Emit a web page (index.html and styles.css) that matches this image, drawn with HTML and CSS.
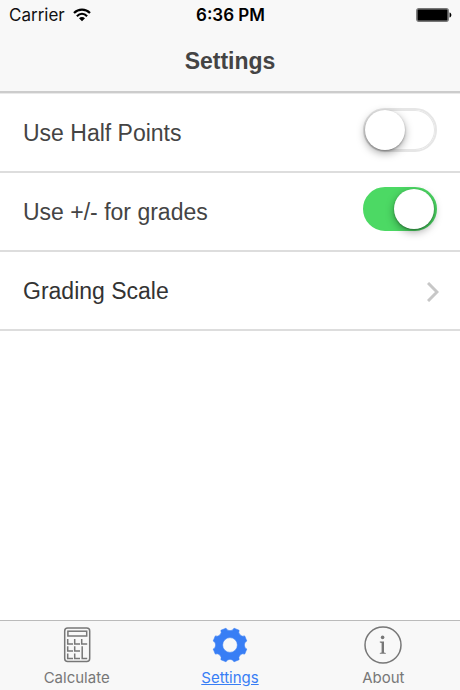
FILE: index.html
```
<!DOCTYPE html>
<html lang="en">
<head>
    <meta charset="UTF-8">
    <meta name="viewport" content="width=device-width, initial-scale=1.0">
    <title>Settings</title>
    <link rel="stylesheet" href="styles.css">
</head>
<body>
    <header class="header">
        <div class="status">
            <div class="carrier">
                <span>Carrier</span>
                <svg width="18" height="14" viewBox="0 0 18 14" fill="none" stroke="#000" stroke-width="2.2">
                    <path d="M1 5C5.5 .6 12.5 .6 17 5"/>
                    <path d="M3.9 8.2C6.9 5.2 11.1 5.2 14.1 8.2"/>
                    <path d="M9 13.2L6 10.3C7.7 8.7 10.3 8.7 12 10.3Z" fill="#000" stroke="none"/>
                </svg>
            </div>
            <span class="time">6:36 PM</span>
            <svg class="battery" width="36" height="14" viewBox="0 0 36 14">
                <rect x=".7" y=".7" width="31.6" height="12.6" rx="2" fill="#999" stroke="#777" stroke-width="1.2"/>
                <rect x="1.6" y="1.6" width="29.8" height="10.8" rx="1" fill="#000"/>
                <path d="M33.5 4.5C36 5 36 9 33.5 9.5Z" fill="#000"/>
            </svg>
        </div>
        <h1>Settings</h1>
    </header>

    <main class="list">
        <div class="item">
            <label for="half">Use Half Points</label>
            <input type="checkbox" class="toggle" id="half">
        </div>
        <div class="item">
            <label for="plus">Use +/- for grades</label>
            <input type="checkbox" class="toggle" id="plus" checked>
        </div>
        <a href="#scale" class="item link">
            <span>Grading Scale</span>
            <svg width="12" height="20" viewBox="0 0 12 20" fill="none" stroke="#c7c7c7" stroke-width="3">
                <path d="M1 1L10 10L1 19"/>
            </svg>
        </a>
    </main>

    <nav class="tabs">
        <a href="#calculate" class="tab">
            <svg width="38" height="38" viewBox="0 0 38 38" fill="none" stroke="#777" stroke-width="1.5">
                <rect x="6.7" y="2" width="25" height="33.4" rx="3"/>
                <rect x="9.9" y="5.2" width="18.8" height="4.8"/>
                <path d="M9.7 13V18H15M16.7 13V18H22M23.7 13V18H29.2"/>
                <path d="M9.7 20.2V25H15M16.7 20.2V25H22"/>
                <path d="M9.7 27.4V32.4H15M16.7 27.4V32.4H22M24.2 20.2V32.4H29.2"/>
            </svg>
            <span>Calculate</span>
        </a>
        <a href="#settings" class="tab active">
            <svg width="38" height="38" viewBox="-19 -19 38 38">
                <path fill="#387ef5" stroke="#387ef5" stroke-width=".6" stroke-linejoin="round" fill-rule="evenodd" d="M-4 -16.8Q-3 -14.3 0 -14.3Q3 -14.3 4 -16.8L9.1 -14.7Q8 -12.2 10.1 -10.1Q12.2 -8 14.7 -9.1L16.8 -4Q14.3 -3 14.3 0Q14.3 3 16.8 4L14.7 9.1Q12.2 8 10.1 10.1Q8 12.2 9.1 14.7L4 16.8Q3 14.3 0 14.3Q-3 14.3 -4 16.8L-9.1 14.7Q-8 12.2 -10.1 10.1Q-12.2 8 -14.7 9.1L-16.8 4Q-14.3 3 -14.3 0Q-14.3 -3 -16.8 -4L-14.7 -9.1Q-12.2 -8 -10.1 -10.1Q-8 -12.2 -9.1 -14.7ZM0 -7.4A7.4 7.4 0 1 0 0 7.4A7.4 7.4 0 1 0 0 -7.4Z"/>
            </svg>
            <span>Settings</span>
        </a>
        <a href="#about" class="tab">
            <svg width="38" height="38" viewBox="0 0 38 38" fill="#777">
                <circle cx="19" cy="19" r="18" fill="none" stroke="#777" stroke-width="1.5"/>
                <circle cx="18.6" cy="11.4" r="1.8"/>
                <path d="M15.8 15.6H20V26.6L21.8 27V27.8H15.8V27L17.6 26.6V17L15.8 16.5Z"/>
            </svg>
            <span>About</span>
        </a>
    </nav>
</body>
</html>
```
FILE: styles.css
```
* {
    margin: 0;
    padding: 0;
    box-sizing: border-box;
}
body {
    min-height: 100vh;
    display: flex;
    flex-direction: column;
    background-color: #fff;
    color: #444;
    font-family: "Liberation Sans", Arial, sans-serif;
}
a {
    color: inherit;
    text-decoration: none;
}
.header {
    background-color: #f8f8f8;
    border-bottom: 2px solid #ccc;
}
.status {
    display: grid;
    grid-template-columns: 1fr auto 1fr;
    align-items: center;
    height: 30px;
    padding: 0 8px 0 9px;
    color: #111;
    font-family: Inter, sans-serif;
    font-size: 17px;
}
.carrier {
    display: flex;
    align-items: center;
    gap: 8px;
}
.time {
    color: #000;
    font-weight: 600;
}
.battery {
    justify-self: end;
}
h1 {
    padding: 2px 0 1px;
    line-height: 58px;
    text-align: center;
    font-size: 23px;
}
.list {
    flex: 1;
    border-top: 1px solid #e9e9e9;
}
.item {
    display: flex;
    align-items: center;
    justify-content: space-between;
    height: 79px;
    padding: 2px 23px 0;
    border-bottom: 2px solid #ddd;
    font-size: 23px;
}
.link {
    color: #333;
    padding-right: 21px;
}
.toggle {
    appearance: none;
    align-self: flex-start;
    width: 74px;
    height: 44px;
    margin-top: 12px;
    border: 2px solid #e6e6e6;
    border-radius: 22px;
    background-color: #fff;
    box-shadow: inset 0 0 0 1px #e6e6e6;
    cursor: pointer;
}
.toggle::before {
    content: "";
    display: block;
    width: 40px;
    height: 40px;
    border-radius: 50%;
    background-color: #fff;
    box-shadow: 0 3px 8px rgba(0, 0, 0, 0.35), 0 1px 2px rgba(0, 0, 0, 0.3);
}
.toggle:checked {
    border-color: #4cd964;
    background-color: #4cd964;
    box-shadow: none;
}
.toggle:checked::before {
    margin-left: 29px;
}
.tabs {
    display: flex;
    height: 70px;
    padding-top: 5px;
    background-color: #f8f8f8;
    border-top: 1px solid #bbb;
}
.tab {
    flex: 1;
    display: flex;
    flex-direction: column;
    align-items: center;
    gap: 4px;
    color: #777;
    font-family: Inter, sans-serif;
    font-size: 15px;
    line-height: 20px;
}
.active {
    color: #387ef5;
    text-decoration: underline;
}
```
